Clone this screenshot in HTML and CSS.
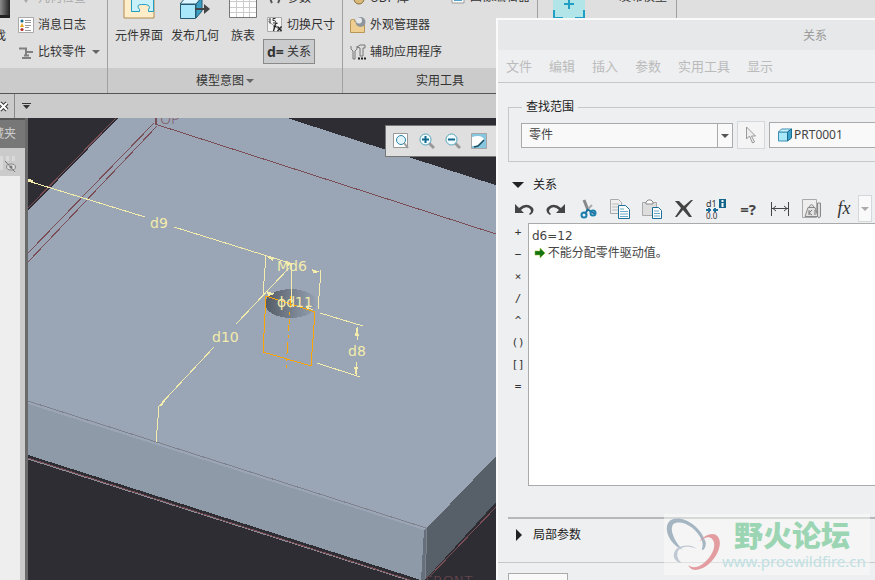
FILE: index.html
```html
<!DOCTYPE html>
<html lang="zh-CN">
<head>
<meta charset="utf-8">
<title>关系</title>
<link rel="stylesheet" href="styles.css">
</head>
<body>
<div class="app">
  <header class="ribbon">
    <section class="group group-find">
      <div class="group-body">
        <button class="big big-find"><svg class="icon32" viewBox="0 0 32 32"><defs><linearGradient id="tube"><stop offset="0" stop-color="#555"/><stop offset=".65" stop-color="#999"/><stop offset="1" stop-color="#222"/></linearGradient></defs><path d="M0 0h32v31H0z" fill="url(#tube)"/><path d="M0 28h32v3H0z" fill="#222"/></svg><span>查找</span></button>
        <div class="rows">
          <button class="row muted"><svg class="icon16" viewBox="0 0 16 16"><path d="M2 6h12v4H10l-2 3-2-3H2z" fill="#aaa"/></svg>几何检查</button>
          <button class="row"><svg class="icon16" viewBox="0 0 16 16"><path d="M.500 .500h15v15H.500z" fill="#fff" stroke="#aaa"/><path d="M7 3.500h6M7 5.500h6M7 8.500h6M7 10.500h4M7 13.500h6" stroke="#999"/><circle cx="4" cy="4" r="1.600" fill="#1b6b90"/><path d="M4 6l2 4H2z" fill="#e5a51c"/><circle cx="4" cy="12.500" r="1.600" fill="#b5322f"/></svg>消息日志</button>
          <button class="row"><svg class="icon16" viewBox="0 0 16 16"><path d="M1 4.500h7v6M7 8h8M4 14h9M6 11.500h5" fill="none" stroke="#808080" stroke-width="2"/></svg>比较零件<i class="caret"></i></button>
        </div>
      </div>
      <div class="group-label"></div>
    </section>
    <section class="group group-intent">
      <div class="group-body">
        <button class="big"><svg class="icon32" viewBox="0 0 32 32"><path d="M1 1h30v30H1z" fill="#ffedc9" stroke="#b08b51"/><path d="M8.500 4v20.500h8v-2q-4-5 2-5h4q6 1 3 5v2h5V4z" fill="#c9f1fa" stroke="#239cc4"/></svg><span>元件界面</span></button>
        <button class="big"><svg class="icon32" viewBox="0 0 32 32"><path d="M1.500 17.500h15v14h-15z" fill="#a9e7fa" stroke="#245a73"/><path d="M17 17l6-7v14l-6 7z" fill="#3a9fc4" stroke="#245a73"/><path d="M1 17l6-7h16l-6 7z" fill="#dbf6ff" stroke="#245a73"/><path d="M16 22h10" stroke="#444" stroke-width="2"/><path d="M25 17l6 5-6 5z" fill="#444"/></svg><span>发布几何</span></button>
        <button class="big big-narrow"><svg class="icon32" viewBox="0 0 32 32"><path d="M2.500 2.500h27v28h-27z" fill="#fff" stroke="#777"/><path d="M3 9.500h26M3 14.500h26M3 20.500h26M3 25.500h26M9.500 3v27M16.500 3v27M22.500 3v27" stroke="#ccc"/></svg><span>族表</span></button>
        <div class="rows">
          <button class="row"><svg class="icon16" viewBox="0 0 16 16"><path d="M5 3q-3 5 0 10M11 3q3 5 0 10" fill="none" stroke="#555" stroke-width="2"/></svg>参数</button>
          <button class="row"><svg class="icon16" viewBox="0 0 16 16"><path d="M.500 .500h14v14H.500z" fill="#f3f3f3" stroke="#aaa"/><path d="M1 4l13 10" stroke="#999"/><path d="M2 2.500l1-1v5M8.500 1.500H6v2h1.500q1 0 1 1.500t-2.500 1" fill="none" stroke="#333"/><path d="M10.500 6.500q-2-1-2.500 2L6.500 14M6.500 9.500h3M10.500 9.500l4 4.500M14.500 9.500l-4 4.500" fill="none" stroke="#222" stroke-width="1.300"/></svg>切换尺寸</button>
          <button class="row pressed"><span class="deq">d=</span>关系</button>
        </div>
      </div>
      <div class="group-label">模型意图<i class="caret"></i></div>
    </section>
    <section class="group group-tools">
      <div class="group-body">
        <div class="rows">
          <button class="row"><svg class="icon16" viewBox="0 0 16 16"><circle cx="9" cy="9" r="5" fill="#d9ba78" stroke="#8c6f3d"/></svg>UDF 库</button>
          <button class="row"><svg class="icon16" viewBox="0 0 16 16"><path d="M.500 4q0-1.500 2-1.500h2v2h10v11H.500z" fill="#efce91" stroke="#b8965a"/><circle cx="10.500" cy="5" r="5" fill="#8f969b"/><circle cx="9" cy="3.500" r="3" fill="#e4e8ea"/></svg>外观管理器</button>
          <button class="row"><svg class="icon16" viewBox="0 0 16 16"><path d="M1 2v3l2 2v8h2V7l2-2V2M7 3l3-2h5v3h-2v8h-3V4z" fill="#ddd" stroke="#777"/><path d="M8 14.500h2M11 14.500h2M14 14.500h2" stroke="#222" stroke-width="2"/></svg>辅助应用程序</button>
        </div>
        <div class="rows rows-top">
          <button class="row"><svg class="icon16" viewBox="0 0 16 16"><path d="M2 1h12v13H2z" fill="#fff" stroke="#999"/><path d="M4 8h8v4H4z" fill="#53a4ca"/></svg>图像编辑器</button>
        </div>
      </div>
      <div class="group-label">实用工具</div>
    </section>
    <section class="group group-device">
      <div class="group-body">
        <button class="big" aria-label="发布"><svg class="icon32" viewBox="0 0 32 32"><path d="M0 0h32v32H0z" fill="#b1e5e7"/><path d="M1 23v8h9M22 31h9v-8M16 12v10M11 17h10" fill="none" stroke="#1f9fc4" stroke-width="2"/></svg><span>&nbsp;</span></button>
        <div class="rows rows-top"><button class="row">发布模型</button></div>
      </div>
      <div class="group-label"></div>
    </section>
    <section class="group group-rest"><div class="group-body"></div><div class="group-label"></div></section>
  </header>

  <nav class="tabstrip">
    <button class="close-tab" aria-label="关闭"><svg viewBox="0 0 14 14"><path d="M0 4l7 7M7 4l-7 7" stroke="#333" stroke-width="4"/><path d="M0 4l7 7M7 4l-7 7" stroke="#fff" stroke-width="2"/></svg></button>
    <button class="more-tabs" aria-label="更多"><svg viewBox="0 0 9 8"><path d="M0 1.500h9" stroke="#333"/><path d="M1 3h7L4.500 7z" fill="#333"/></svg></button>
  </nav>

  <main class="workspace">
    <aside class="navigator">
      <div class="nav-tab">收藏夹</div>
      <div class="nav-tools"><svg class="icon16" viewBox="0 0 16 16"><path d="M0 0h3v14H0zM6 0h3v5H6zM12 0h3v5h-3z" fill="#dadada"/><ellipse cx="11" cy="11" rx="4.500" ry="3" fill="#ddd" stroke="#888"/><circle cx="11" cy="11" r="1.500" fill="#777"/><path d="M5 5l10 11" stroke="#777"/></svg></div>
      <div class="nav-list"></div>
    </aside>
    <div class="viewer">
      <svg class="scene" viewBox="28 118 847 462" preserveAspectRatio="xMinYMin slice" shape-rendering="crispEdges">
        <defs><linearGradient id="hole"><stop offset="0" stop-color="#555c67"/><stop offset="1" stop-color="#96a2b2"/></linearGradient></defs>
        <path d="M28 211L118 118H287L875 307V460L496 457L427 528L424 530L28 404z" fill="#9aa5b5"/>
        <path d="M28 404L424 530L421 580L28 455z" fill="#8e9aa8"/>
        <path d="M427 528L496 456V502L425 580z" fill="#575f69"/>
        <path d="M424 530L427 528L425 580H421z" fill="#65707c"/>
        <path d="M427 529L425 580" stroke="#7d828c" fill="none"/>
        <path d="M28 401L426 528" stroke="#7d828c" fill="none"/>
        <path d="M28 459L408 580" stroke="#8a8f99" fill="none"/>
        <g fill="none" stroke="#7b4d55"><path d="M28 458L410 580M430 576L496 507M28 208L116 118M28 253L154 123M28 262L157 126M155 124L496 234"/><path d="M156 118V125" stroke-width="2"/></g>
        <g class="datum"><text x="160" y="124">OP</text><text x="425" y="586">FRONT</text></g>
        <ellipse cx="291" cy="303.500" rx="26" ry="14.500" fill="url(#hole)"/>
        <g fill="none" stroke="#f3ecac">
          <path d="M28 181L145 217M174 227L293 264M289 268L236 324M214 347L159 406L156 442M266 255L263 294M321 270L318 309M292 264L291 304M320 313L363 326M317 363L360 377M358 327L357 340M357 362L356 376"/>
        </g>
        <path d="M28 179l5 1v3l-5-1zM266 256l8 2-1 3zM286 262l7 2-6 2zM312 269l8 3-7 1zM267 291l8 3-7 2zM306 306l8 4-7-1zM357 326l2 10h-4zM356 376l2-9h-4zM159 406l6-5-3 5z" fill="#f3ecac"/>
        <path d="M266 296L315 312L311 366L263 352z" fill="none" stroke="#ffa500"/>
        <path d="M291 296L286 368" fill="none" stroke="#ffa500" stroke-dasharray="12 4 3 4"/>
        <g class="dims"><text x="150" y="228">d9</text><text x="212" y="342">d10</text><text x="277" y="271">Md6</text><text x="277" y="307">ϕd11</text><text x="348" y="356">d8</text></g>
      </svg>
      <div class="view-bar">
        <button aria-label="重新调整"><svg class="icon16" viewBox="0 0 16 16"><path d="M.500 .500h14v14H.500z" fill="#fff" stroke="#999"/><circle cx="8" cy="7" r="4.500" fill="#e3f4fb" stroke="#2d86a8"/><path d="M11 10l4 5" stroke="#999" stroke-width="2"/></svg></button>
        <button aria-label="放大"><svg class="icon16" viewBox="0 0 16 16"><path d="M10 10l5 5" stroke="#999" stroke-width="3"/><circle cx="6.500" cy="6.500" r="5.500" fill="#f0fbff" stroke="#56a3bc"/><path d="M3 6.500h7M6.500 3v7" stroke="#12688e" stroke-width="2"/></svg></button>
        <button aria-label="缩小"><svg class="icon16" viewBox="0 0 16 16"><path d="M10 10l5 5" stroke="#999" stroke-width="3"/><circle cx="6.500" cy="6.500" r="5.500" fill="#f0fbff" stroke="#56a3bc"/><path d="M3 6.500h7" stroke="#12688e" stroke-width="2"/></svg></button>
        <button aria-label="重画"><svg class="icon16" viewBox="0 0 16 16"><path d="M.500 .500h15v15H.500z" fill="#86c6de" stroke="#a5a5a5"/><path d="M1 4q9-3 12 2-4 8-12 7z" fill="#fff"/><path d="M3 14l4-1 6-6" fill="none" stroke="#164e66" stroke-width="1.500"/></svg></button>
      </div>
    </div>
  </main>

  <div class="dialog" role="dialog" aria-labelledby="dlg-title">
    <div class="dlg-title" id="dlg-title">关系</div>
    <nav class="menu"><button>文件</button><button>编辑</button><button>插入</button><button>参数</button><button>实用工具</button><button>显示</button></nav>
    <div class="dlg-body">
      <fieldset class="scope">
        <legend>查找范围</legend>
        <div class="scope-row">
          <span class="select-wrap"><select aria-label="查找范围"><option>零件</option></select></span>
          <button class="pick" aria-label="选择"><svg viewBox="0 0 12 18"><path d="M1.500 1v12l3-3 3 7 2-1-3-6h4z" fill="#eee" stroke="#999"/></svg></button>
          <div class="part"><svg viewBox="0 0 14 14"><path d="M.500 4h9v9h-9z" fill="#a9e7fa" stroke="#3c8fb3"/><path d="M.500 4l3-3h10l-4 3z" fill="#ccf3ff" stroke="#3c8fb3"/><path d="M9.500 4l4-3v9l-4 3z" fill="#3ba3cc" stroke="#1c6d92"/></svg>PRT0001</div>
        </div>
      </fieldset>
      <h2 class="section"><i class="tri-down"></i>关系</h2>
      <div class="tools">
        <button aria-label="撤消"><svg viewBox="0 0 20 20"><path d="M1 5v9h9l-3-3q4-4 8-2 4 3 0 6l1 1q6-4 2-8-6-5-13 1z" fill="#444"/></svg></button>
        <button aria-label="重做"><svg viewBox="0 0 20 20"><path d="M19 5v9h-9l3-3q-4-4-8-2-4 3 0 6l-1 1q-6-4-2-8 6-5 13 1z" fill="#444"/></svg></button>
        <button aria-label="剪切"><svg viewBox="0 0 20 20"><path d="M6 1l4 10" stroke="#888" stroke-width="3"/><path d="M14 6l-5 5" stroke="#aaa" stroke-width="2"/><path d="M9 10l8 5M10 10l-3 5" stroke="#1b6f98" stroke-width="2"/><circle cx="6" cy="16" r="2.500" fill="none" stroke="#1b7fae" stroke-width="2"/><circle cx="15" cy="14" r="2.500" fill="none" stroke="#1b7fae" stroke-width="2"/></svg></button>
        <button aria-label="复制"><svg viewBox="0 0 20 20"><path d="M.500 .500h8l3 3v11H.500z" fill="#eee" stroke="#aaa"/><path d="M2 5h7M2 8h6M2 11h6" stroke="#bbb"/><path d="M8.500 6.500h7l4 4v9h-11z" fill="#fff" stroke="#1b6f98"/><path d="M10 10h4M10 12.500h8M10 15h8M10 17.500h8" stroke="#69a9c8"/></svg></button>
        <button aria-label="粘贴"><svg viewBox="0 0 20 20"><path d="M.500 3.500h14v13H.500z" fill="#ddd" stroke="#aaa"/><path d="M4 5V3l2-2h3l2 2v2z" fill="#fff" stroke="#888"/><path d="M10.500 8.500h6l3 3v8h-9z" fill="#fff" stroke="#1b6f98"/><path d="M12 12h5M12 14.500h6M12 17h6" stroke="#69a9c8"/></svg></button>
        <button aria-label="删除"><svg viewBox="0 0 20 20"><path d="M1 2h4l5 5 7-6h2l-7 8 6 9h-3l-6-7-6 7H1l6-9z" fill="#444"/></svg></button>
        <button aria-label="切换尺寸"><svg viewBox="0 0 20 20"><text x="0" y="8" font-size="9" fill="#333">d1</text><path d="M0 11h5M3 9v4M7 11h5M9 9v4" stroke="#1b6f98" stroke-width="2"/><text x="0" y="20" font-size="8" fill="#333">0.0</text><path d="M13 0h7v9h-7z" fill="#12658a"/><path d="M16.500 1v2M16.500 4v4" stroke="#fff" stroke-width="2"/></svg></button>
        <button aria-label="求值"><b>=?</b></button>
        <button aria-label="测量"><svg viewBox="0 0 20 20"><path d="M1.500 3v14M18.500 3v14M2 9.500h16M6 7L3 9.500 6 12M14 7l3 2.500-3 2.500" fill="none" stroke="#444"/></svg></button>
        <button aria-label="单位"><svg viewBox="0 0 20 20"><path d="M.500 .500h14v18H.500z" fill="#eee" stroke="#aaa"/><path d="M6 8.500h7l3 9H3zM7 8.500q2.500-6 5 0" fill="#e2e2e2" stroke="#888"/><path d="M7 11v5M10 11l-3 3 3 2M13 11v5" fill="none" stroke="#777"/><path d="M15.500 4v13q1.500 4 3 0V4z" fill="#ddd" stroke="#888"/></svg></button>
        <button aria-label="函数"><i class="fx">fx</i></button>
        <button class="drop" aria-label="更多函数"><i class="caret pale"></i></button>
      </div>
      <div class="edit-row">
        <div class="ops"><button>+</button><button>−</button><button>×</button><button>/</button><button>^</button><button>()</button><button>[]</button><button>=</button></div>
        <div class="editor">
          <textarea aria-label="关系" spellcheck="false">d6=12
　 不能分配零件驱动值。</textarea>
          <svg class="mark" viewBox="0 0 12 12"><path d="M1 4h5V1l5 5-5 5V8H1z" fill="#137313" stroke="#8ab51e" stroke-width=".500"/></svg>
        </div>
      </div>
      <h2 class="section local"><i class="tri-right"></i>局部参数</h2>
    </div>
    <footer class="dlg-foot"><button aria-label="重置"></button></footer>
  </div>

  <div class="watermark">
    <svg viewBox="0 0 58 58"><path d="M4 4C14-4 36 8 41 26q1 4-2 8h-2q2-6 0-10C32 11 16 2 8 7 3 12 8 24 17 34 4 28-4 12 4 4z" fill="#a5b5c1"/><path d="M34 26q8-10 17-8c12 6 0 34-20 37q-6 0-8-5 6 4 13 0c12-8 18-22 11-28q-5-3-13 4z" fill="#e39da1"/><path d="M32 33q-9-4-16-1t-3 12l3 4q-8-2-8-8 0-8 9-10t15 3z" fill="#c0c8d3"/></svg>
    <div><strong>野火论坛</strong><span>www.proewildfire.cn</span></div>
  </div>
</div>
</body>
</html>
```
FILE: styles.css
```css
* { box-sizing: border-box; }
body { margin: 0; font: 12px/18px "Noto Sans", "Noto Sans CJK SC", sans-serif; color: #333; }
button, select, textarea { font: inherit; color: inherit; border: 0; padding: 0; background: none; }
button { white-space: nowrap; }
svg { display: block; flex: none; }
.app { position: relative; display: flex; flex-direction: column; height: 100vh; overflow: hidden; background: #cbcbcb; }

.ribbon { display: flex; flex: none; margin-left: -18px; background: #dfdfdf; border-bottom: 1px solid #555; }
.group { flex: none; border-right: 1px solid #a0a0a0; }
.group-find { width: 126px; }
.group-intent { width: 235px; }
.group-tools { width: 195px; }
.group-device { width: 139px; }
.group-rest { flex: 1; border: 0; }
.group-body { display: flex; align-items: flex-end; height: 68px; overflow: hidden; }
.group-label { display: flex; align-items: center; justify-content: center; gap: 2px; height: 25px; background: #cbcbcb; }
.big { display: flex; flex-direction: column; align-items: center; gap: 8px; flex: none; width: 56px; margin-bottom: 23px; }
.big-find { width: 24px; margin-right: 8px; }
.big-narrow { width: 40px; }
.group-intent .group-body { padding-left: 3px; }
.group-tools .group-body { padding-left: 3px; }
.group-device .group-body { padding-left: 3px; gap: 18px; }
.icon32 { width: 32px; height: 32px; }
.icon16 { width: 16px; height: 16px; }
.rows { display: flex; flex-direction: column; align-items: flex-start; gap: 2px; padding-bottom: 4px; }
.rows-top { padding-bottom: 59px; }
.row { display: flex; align-items: center; gap: 4px; height: 25px; padding: 0 4px; }
.muted { color: #aaa; }
.pressed { background: #cbccce; border: 1px solid #8a8a8a; padding: 0 3px; }
.deq { width: 16px; font-size: 14px; font-weight: bold; }
.caret { border: 4px solid transparent; border-top: 4px solid #666; border-bottom: 0; margin-left: 2px; }
.group-label .caret { margin-left: 0; }
.tools .pale { border-top-color: #aaa; margin: 0; }

.tabstrip { display: flex; flex: none; height: 24px; }
.close-tab { width: 15px; border-right: 1px solid #888; }
.close-tab svg { width: 14px; height: 14px; }
.more-tabs { padding: 0 7px; }
.more-tabs svg { width: 9px; height: 8px; }

.workspace { display: flex; flex: 1; min-height: 0; }
.navigator { display: flex; flex-direction: column; width: 28px; flex: none; border-right: 3px solid #6a6a6a; }
.nav-tab { display: flex; align-items: center; justify-content: flex-end; height: 30px; padding-right: 9px; overflow: hidden; white-space: nowrap; background: #777; border-top: 2px solid #555; color: #ccc; }
.nav-tools { height: 28px; padding-top: 8px; }
.nav-list { flex: 1; margin-right: 5px; background: #eee; }
.viewer { position: relative; flex: 1; min-width: 0; background: #2f2d34; overflow: hidden; }
.scene { width: 100%; height: 100%; }
.dims { font: 14px "DejaVu Sans", sans-serif; fill: #f3ecac; }
.datum { font: 14px "DejaVu Sans", sans-serif; font-weight: 200; fill: #7b4d55; }
.view-bar { position: absolute; left: 357px; right: 0; top: 7px; display: flex; height: 32px; padding-left: 2px; background: #dfdfdf; border: 1px solid #777; }
.view-bar button { display: flex; align-items: center; justify-content: center; width: 26px; }

.dialog { position: absolute; left: 496px; top: 18px; bottom: 0; width: 638px; display: flex; flex-direction: column; background: #eeeff1; border: 2px solid #fafafa; border-bottom: 0; }
.dlg-title { height: 30px; line-height: 31px; text-align: center; background: #e6e8ea; color: #999; flex: none; }
.menu { display: flex; gap: 17px; height: 33px; flex: none; padding: 0 8px; border-bottom: 1px solid #c5c7cb; color: #bbb; font-size: 13px; }
.dlg-body { padding: 18px 10px 0; flex: none; height: 479px; }
.scope { margin: 0; padding: 8px 12px 11px; border: 1px solid #c5c8cb; height: 61px; }
.scope legend { margin-left: 1px; padding: 0 4px; line-height: 12px; color: #222; }
.scope-row { display: flex; align-items: center; gap: 4px; }
.select-wrap { position: relative; width: 212px; height: 25px; }
.select-wrap select { appearance: none; width: 100%; height: 100%; padding: 0 7px; background: #f9f9f9; border: 1px solid #aaa; border-radius: 0; color: #444; }
.select-wrap::before { content: ""; position: absolute; right: 15px; top: 0; bottom: 0; border-left: 1px solid #aaa; }
.select-wrap::after { content: ""; position: absolute; right: 4px; top: 11px; border: 4px solid transparent; border-top-color: #555; border-bottom: 0; }
.pick { display: flex; align-items: center; justify-content: center; width: 28px; height: 28px; border: 1px solid #d4d7db; background: #f4f4f5; }
.pick svg { width: 12px; height: 18px; }
.part { display: flex; align-items: center; gap: 2px; flex: 1; height: 26px; padding: 0 8px; background: #f9f9f9; border: 1px solid #aaa; color: #444; }
.part svg { width: 14px; height: 14px; }
.section { display: flex; align-items: center; gap: 9px; margin: 0; height: 18px; font-size: 12px; font-weight: normal; color: #222; padding-left: 4px; }
.scope + .section { margin-top: 14px; }
.tri-down { border: 6px solid transparent; border-top: 6px solid #222; border-bottom: 0; }
.tri-right { border: 6px solid transparent; border-left: 6px solid #222; border-right: 0; margin: 0 2px 0 4px; }
.tools { display: flex; align-items: center; height: 27px; margin-top: 1px; }
.tools button { display: flex; align-items: center; justify-content: center; flex: none; width: 32px; height: 27px; }
.tools svg { width: 20px; height: 20px; }
.tools b { font-size: 15px; color: #444; }
.fx { font: italic 18px "Liberation Serif", serif; color: #333; }
.tools .drop { width: 14px; margin-left: -2px; border: 1px solid #d4d7db; background: #f9f9f9; }
.edit-row { display: flex; align-items: flex-start; }
.ops { display: flex; flex-direction: column; width: 20px; }
.ops button { height: 22px; font-family: "DejaVu Sans Mono", monospace; font-size: 11px; }
.editor { position: relative; flex: 1; height: 263px; margin-top: 1px; }
.editor textarea { display: block; width: 100%; height: 100%; resize: none; padding: 4px 3px; background: #fff; border: 1px solid #aaa; border-radius: 0; font: 12px/17px "DejaVu Sans", "Noto Sans CJK SC", sans-serif; color: #444; }
.mark { position: absolute; left: 6px; top: 24px; width: 12px; height: 12px; }
.local { margin-top: 31px; height: 33px; border-top: 2px solid #b5b7ba; padding-left: 4px; }
.dlg-foot { flex: 1; padding: 10px; border-top: 1px solid #c5c7cb; }
.dlg-foot button { width: 60px; height: 28px; background: #f9f9f9; border: 1px solid #aaa; }

.watermark { position: absolute; right: 5px; bottom: 5px; display: flex; align-items: center; height: 61px; padding-left: 2px; width: 206px; background: rgba(250, 252, 248, .5); }
.watermark svg { width: 56px; height: 56px; }
.watermark div { display: flex; flex-direction: column; align-items: flex-start; }
.watermark strong { font: 900 29px/32px "Noto Sans CJK SC", sans-serif; color: #9bd5b3; padding-left: 12px; }
.watermark span { font-size: 15px; line-height: 22px; color: #c0dfe2; }
```
